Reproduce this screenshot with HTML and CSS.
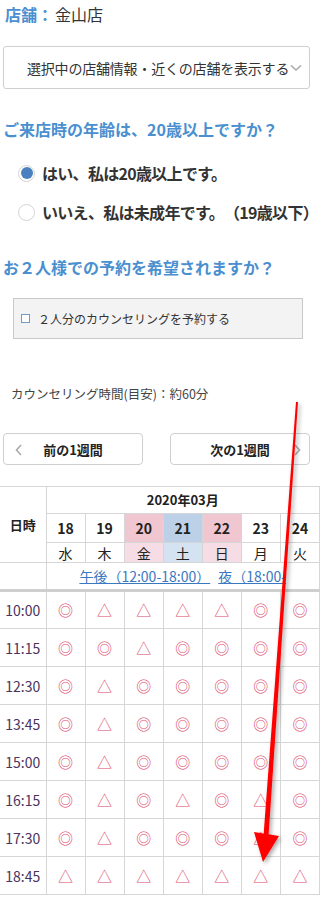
FILE: index.html
```html
<!DOCTYPE html>
<html lang="ja">
<head>
<meta charset="utf-8">
<link rel="stylesheet" href="styles.css">
</head>
<body>
<div class="page">
  <div class="store"><span class="store-label">店舗：</span><span class="store-name">金山店</span></div>
  <div class="select">
    <span class="select-text">選択中の店舗情報・近くの店舗を表示する</span>
    <svg class="select-chev" width="12" height="8" viewBox="0 0 12 8"><path d="M1 1.5 L6 6 L11 1.5" fill="none" stroke="#aaa" stroke-width="1.6"/></svg>
  </div>

  <h2 class="q q-age">ご来店時の年齢は、20歳以上ですか？</h2>
  <div class="radio-row radio-first"><span class="radio checked"></span><span class="radio-label">はい、私は20歳以上です。</span></div>
  <div class="radio-row"><span class="radio"></span><span class="radio-label">いいえ、私は未成年です。（19歳以下）</span></div>

  <h2 class="q q-pair">お２人様での予約を希望されますか？</h2>
  <div class="check-box"><span class="check"></span><span class="check-label">２人分のカウンセリングを予約する</span></div>

  <p class="duration">カウンセリング時間(目安)：約60分</p>

  <div class="week-nav">
    <div class="week-btn"><svg class="nav-chev left" width="7" height="12" viewBox="0 0 7 12"><path d="M6 1 L1.5 6 L6 11" fill="none" stroke="#aaa" stroke-width="1.6"/></svg><span>前の1週間</span></div>
    <div class="week-btn"><span>次の1週間</span><svg class="nav-chev right" width="7" height="12" viewBox="0 0 7 12"><path d="M1 1 L5.5 6 L1 11" fill="none" stroke="#aaa" stroke-width="1.6"/></svg></div>
  </div>

  <table class="cal">
    <colgroup><col class="c-time"><col><col><col><col><col><col><col></colgroup>
    <tr class="r-month"><th rowspan="3" class="th-time">日時</th><th colspan="7">2020年03月</th></tr>
    <tr class="r-day"><th>18</th><th>19</th><th class="fri">20</th><th class="sat">21</th><th class="sun">22</th><th>23</th><th>24</th></tr>
    <tr class="r-wd"><th>水</th><th>木</th><th class="fri">金</th><th class="sat">土</th><th class="sun">日</th><th>月</th><th>火</th></tr>
    <tr class="r-link"><td class="link-blank"></td><td colspan="7" class="links"><a>午後（12:00-18:00）</a><a class="night">夜（18:00-</a></td></tr>
    <tr class="slot"><td class="t">10:00</td><td>◎</td><td>△</td><td>△</td><td>△</td><td>△</td><td>◎</td><td>◎</td></tr>
    <tr class="slot"><td class="t">11:15</td><td>◎</td><td>◎</td><td>△</td><td>◎</td><td>◎</td><td>◎</td><td>◎</td></tr>
    <tr class="slot"><td class="t">12:30</td><td>◎</td><td>△</td><td>◎</td><td>◎</td><td>◎</td><td>◎</td><td>◎</td></tr>
    <tr class="slot"><td class="t">13:45</td><td>◎</td><td>△</td><td>◎</td><td>◎</td><td>◎</td><td>◎</td><td>◎</td></tr>
    <tr class="slot"><td class="t">15:00</td><td>◎</td><td>△</td><td>◎</td><td>◎</td><td>◎</td><td>◎</td><td>◎</td></tr>
    <tr class="slot"><td class="t">16:15</td><td>◎</td><td>△</td><td>◎</td><td>△</td><td>◎</td><td>△</td><td>◎</td></tr>
    <tr class="slot"><td class="t">17:30</td><td>◎</td><td>△</td><td>◎</td><td>◎</td><td>◎</td><td>△</td><td>◎</td></tr>
    <tr class="slot"><td class="t">18:45</td><td>△</td><td>△</td><td>△</td><td>△</td><td>△</td><td>△</td><td>△</td></tr>
  </table>

  <svg class="arrow" width="320" height="898" viewBox="0 0 320 898">
    <defs><filter id="sh" x="-50%" y="-10%" width="200%" height="120%"><feDropShadow dx="2" dy="2" stdDeviation="2" flood-color="#000" flood-opacity="0.35"/></filter></defs>
    <g filter="url(#sh)">
      <polygon points="296,402 298,402 268.5,836 263.5,836" fill="#ff0000"/>
      <polygon points="254,832 279,836 263,862" fill="#ff0000"/>
    </g>
  </svg>
</div>
</body>
</html>
```
FILE: styles.css
```css
* { box-sizing: border-box; }
html, body { margin: 0; padding: 0; background: #fff; }
body {
  width: 320px;
  font-family: "Noto Sans CJK JP", "Noto Sans", sans-serif;
  color: #333;
  overflow: hidden;
  text-spacing-trim: space-all;
}
.page { position: relative; width: 320px; height: 898px; overflow: hidden; }

.store { padding: 3px 0 0 5px; font-size: 16px; line-height: 22px; }
.store-label { color: #4a8fcf; font-weight: bold; }
.store-name { color: #333; margin-left: 2px; }

.select {
  margin: 21px 0 0 3px;
  width: 307px;
  height: 43px;
  border: 1px solid #cfcfcf;
  border-radius: 3px;
  display: flex;
  align-items: center;
  padding-left: 23px;
}
.select-text { font-size: 14px; color: #333; white-space: nowrap; letter-spacing: -0.2px; }
.select-chev { margin-left: 1px; }

.q {
  margin: 0;
  padding-left: 3px;
  font-size: 16px;
  line-height: 22px;
  font-weight: bold;
  color: #4a8fcf;
  white-space: nowrap;
}
.q-age { margin-top: 29px; }
.q-pair { margin-top: 33px; }

.radio-row { display: flex; align-items: center; height: 22px; padding-left: 18px; margin-top: 17px; }
.radio-first { margin-top: 22px; }
.radio {
  width: 17px; height: 17px;
  border: 1px solid #d4d4d4;
  border-radius: 50%;
  background: #fff;
  flex: none;
  position: relative;
}
.radio.checked::after {
  content: "";
  position: absolute;
  left: 1.5px; top: 1.5px;
  width: 12px; height: 12px;
  border-radius: 50%;
  background: #4a80c0;
}
.radio-label { margin-left: 7px; font-size: 16px; letter-spacing: -0.7px; font-weight: bold; color: #333; white-space: nowrap; }

.check-box {
  margin: 20px 0 0 13px;
  width: 290px;
  height: 41px;
  background: #f3f3f3;
  border: 1px solid #c9c9c9;
  display: flex;
  align-items: center;
  padding-left: 7px;
}
.check { width: 9px; height: 9px; border: 1px solid #6a9ad0; background: #fff; flex: none; }
.check-label { margin-left: 8px; font-size: 12px; color: #333; }

.duration { margin: 46px 0 0 11px; font-size: 12.5px; line-height: 18px; color: #444; }

.week-nav { display: flex; justify-content: space-between; padding: 0 10px 0 3px; margin-top: 30px; }
.week-btn {
  width: 140px;
  height: 32px;
  border: 1px solid #cfcfcf;
  border-radius: 4px;
  display: flex;
  align-items: center;
  justify-content: center;
  position: relative;
  font-size: 13px;
  font-weight: bold;
  color: #222;
}
.nav-chev { position: absolute; top: 10px; }
.nav-chev.left { left: 11px; }
.nav-chev.right { right: 8px; }

.cal {
  margin-top: 21px;
  width: 320px;
  border-collapse: collapse;
  table-layout: fixed;
  font-size: 13px;
  line-height: 16px;
}
.c-time { width: 46px; }
.cal th, .cal td { border: 1px solid #d6d6d6; text-align: center; padding: 0; }
.cal tr > :first-child { border-left: none; }
.r-month th { height: 27px; font-weight: bold; color: #222; }
.th-time { font-weight: bold; color: #222; }
.r-day th { height: 29px; font-size: 14px; font-weight: bold; color: #222; }
.r-wd th { height: 20px; font-size: 14px; font-weight: normal; color: #222; }
.r-day .fri, .r-day .sun { background: #f0c6d0; }
.r-day .sat { background: #bcd1e8; }
.r-wd .fri, .r-wd .sun { background: #f5dce5; }
.r-wd .sat { background: #d4e2f1; }
.r-link td { height: 28px; border-bottom: 3px solid #cfcfcf; }
.links { text-align: left; white-space: nowrap; padding-left: 25px; line-height: 18px; }
.links a { color: #3a78c0; text-decoration: underline; font-size: 14px; }
.links a.night { margin-left: 8px; }
.slot td { height: 38px; color: #dd4a6e; font-size: 15px; }
.slot td.t { color: #4a3360; font-size: 14px; }

.arrow { position: absolute; left: 0; top: 0; pointer-events: none; }
```
